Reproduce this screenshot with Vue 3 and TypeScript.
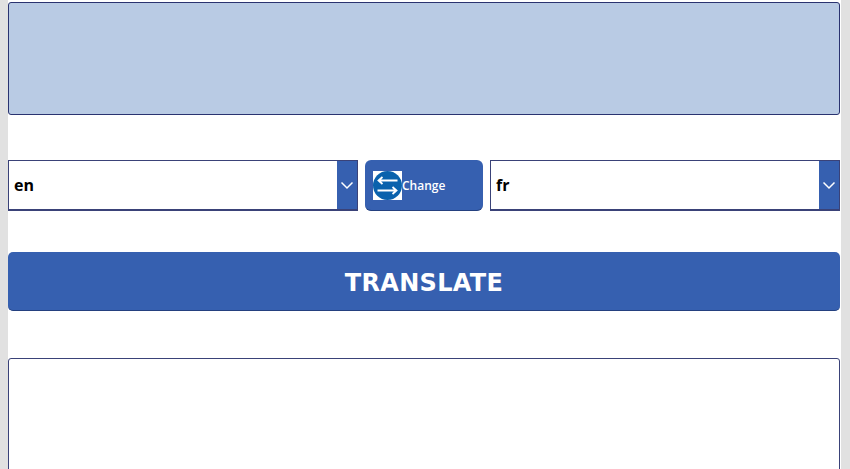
<script setup lang="ts">
const source = 'en'
const target = 'fr'
</script>

<template>
  <div class="page">
    <main class="canvas">
      <div class="source-box"></div>
      <div class="lang-row">
        <div class="select">
          <span class="value">{{ source }}</span>
          <span class="arrow">
            <svg width="14" height="9" viewBox="0 0 14 9"><path d="M1.500 1.500 7 7l5.500-5.500" fill="none" stroke="#fff" stroke-width="1.500" /></svg>
          </span>
        </div>
        <button class="change">
          <svg class="swap" width="29" height="29" viewBox="0 0 29 29">
            <rect width="29" height="29" fill="#fff" />
            <circle cx="14.500" cy="14.500" r="14.500" fill="#0a62ad" />
            <path d="M24.500 9.500H6M9.500 6 5.500 9.500 9.500 13" fill="none" stroke="#fff" stroke-width="1.800" />
            <path d="M4.500 19.500H23M19.500 16l4 3.500-4 3.500" fill="none" stroke="#fff" stroke-width="1.800" />
          </svg>
          <span>Change</span>
        </button>
        <div class="select">
          <span class="value">{{ target }}</span>
          <span class="arrow">
            <svg width="14" height="9" viewBox="0 0 14 9"><path d="M1.500 1.500 7 7l5.500-5.500" fill="none" stroke="#fff" stroke-width="1.500" /></svg>
          </span>
        </div>
      </div>
      <button class="translate">TRANSLATE</button>
      <div class="result-box"></div>
    </main>
  </div>
</template>

<style>
html, body { margin: 0; background: #e1e1e1; }
</style>

<style scoped>
.page {
  width: 850px;
  height: 469px;
  overflow: hidden;
  background: #e1e1e1;
  padding: 0 9px 0 8px;
  box-sizing: border-box;
}
.canvas {
  height: 469px;
  background: #fff;
  padding: 2px 1px 0 0;
  box-sizing: border-box;
  display: flex;
  flex-direction: column;
}
.source-box {
  height: 113px;
  flex: none;
  box-sizing: border-box;
  background: #b9cbe4;
  border: 1px solid #2a3370;
  border-bottom-width: 1.500px;
  border-radius: 3px;
}
.lang-row {
  margin-top: 45px;
  height: 51px;
  flex: none;
  display: grid;
  grid-template-columns: 350px 118px 350px;
  column-gap: 7px;
}
.select {
  display: flex;
  align-items: stretch;
  justify-content: space-between;
  box-sizing: border-box;
  border: 1px solid #3a4278;
  border-bottom-width: 2px;
  background: #fff;
}
.value {
  font: 700 16px "Open Sans", sans-serif;
  color: #000;
  align-self: center;
  padding-left: 5px;
}
.arrow {
  width: 20px;
  background: #3660b0;
  display: flex;
  align-items: center;
  justify-content: center;
}
.change {
  display: flex;
  align-items: center;
  gap: 0;
  padding: 0 0 0 8px;
  border: 0;
  border-bottom: 1px solid #24407f;
  border-radius: 6px;
  background: #3660b0;
  color: #fff;
  font: 600 12px "Open Sans", sans-serif;
}
.swap { flex: none; }
.translate {
  margin-top: 41px;
  height: 59px;
  flex: none;
  padding: 4px 0 0;
  border: 0;
  border-bottom: 1px solid #24407f;
  border-radius: 5px;
  background: #3660b0;
  color: #fff;
  font: 700 24px "DejaVu Sans", sans-serif;
  letter-spacing: 0.3px;
}
.result-box {
  margin-top: 47px;
  flex: none;
  height: 130px;
  box-sizing: border-box;
  background: #fff;
  border: 1px solid #3a4278;
  border-radius: 3px;
}
</style>
